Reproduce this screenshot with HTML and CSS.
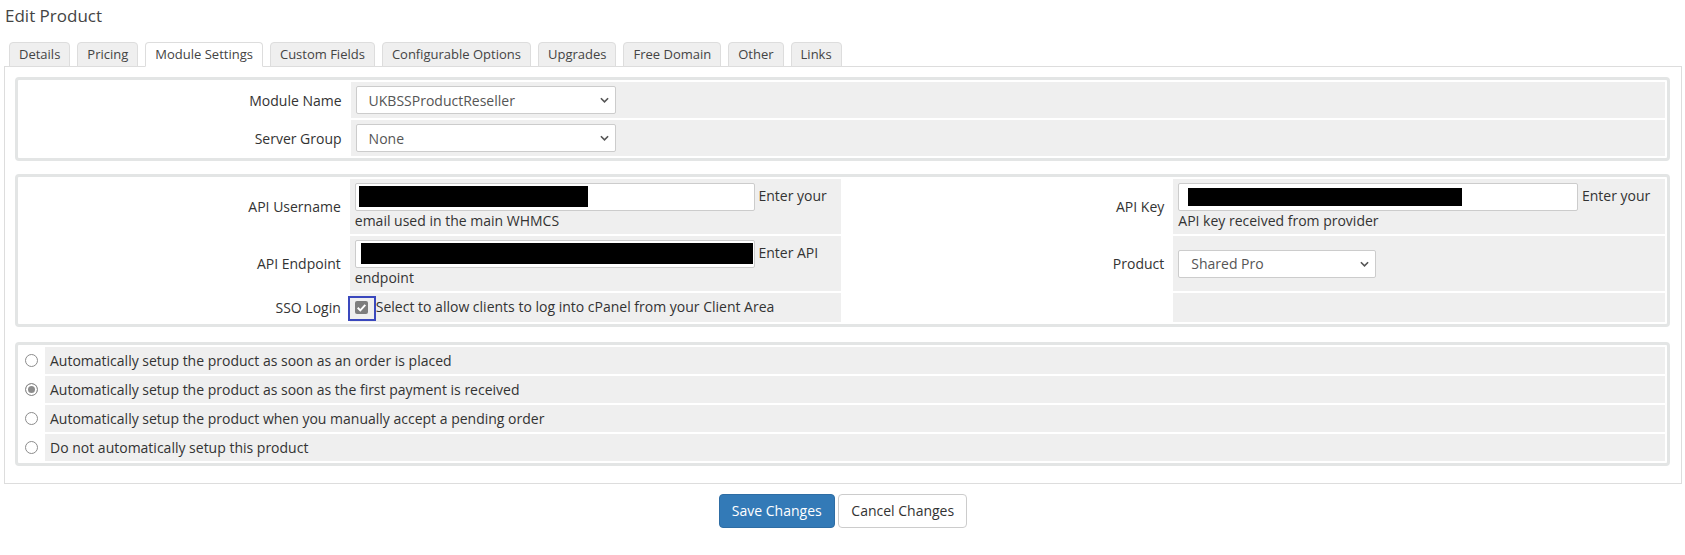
FILE: index.html
```html
<!DOCTYPE html>
<html lang="en">
<head>
    <meta charset="UTF-8">
    <meta name="viewport" content="width=device-width, initial-scale=1.0">
    <title>Edit Product</title>
    <link rel="stylesheet" href="styles.css">
</head>
<body>
    <h1 class="page-title">Edit Product</h1>

    <ul class="tabs">
        <li>Details</li>
        <li>Pricing</li>
        <li class="active">Module Settings</li>
        <li>Custom Fields</li>
        <li>Configurable Options</li>
        <li>Upgrades</li>
        <li>Free Domain</li>
        <li>Other</li>
        <li>Links</li>
    </ul>

    <div class="tab-content">
        <table class="form module-table">
            <tr>
                <td class="fieldlabel">Module Name</td>
                <td class="fieldarea">
                    <div class="select select-wide">
                        <span>UKBSSProductReseller</span>
                        <svg class="chevron" viewBox="0 0 10 6"><path d="M1 1l4 4 4-4"/></svg>
                    </div>
                </td>
            </tr>
            <tr>
                <td class="fieldlabel">Server Group</td>
                <td class="fieldarea">
                    <div class="select select-wide">
                        <span>None</span>
                        <svg class="chevron" viewBox="0 0 10 6"><path d="M1 1l4 4 4-4"/></svg>
                    </div>
                </td>
            </tr>
        </table>

        <table class="form settings-table">
            <tr>
                <td class="fieldlabel">API Username</td>
                <td class="fieldarea">
                    <span class="text-input"><span class="redact redact-user"></span></span> Enter your email used in the main WHMCS
                </td>
                <td class="fieldlabel">API Key</td>
                <td class="fieldarea">
                    <span class="text-input"><span class="redact redact-key"></span></span> Enter your API key received from provider
                </td>
            </tr>
            <tr>
                <td class="fieldlabel">API Endpoint</td>
                <td class="fieldarea">
                    <span class="text-input"><span class="redact redact-endpoint"></span></span> Enter API endpoint
                </td>
                <td class="fieldlabel">Product</td>
                <td class="fieldarea">
                    <div class="select select-small">
                        <span>Shared Pro</span>
                        <svg class="chevron" viewBox="0 0 10 6"><path d="M1 1l4 4 4-4"/></svg>
                    </div>
                </td>
            </tr>
            <tr>
                <td class="fieldlabel">SSO Login</td>
                <td class="fieldarea"><span class="focus-ring"><span class="checkbox"><svg viewBox="0 0 12 12"><path d="M2.5 6.2l2.4 2.4 4.6-5"/></svg></span></span>Select to allow clients to log into cPanel from your Client Area</td>
                <td class="fieldlabel"></td>
                <td class="fieldarea"></td>
            </tr>
        </table>

        <table class="form setup-table">
            <tr>
                <td class="radio-cell"><span class="radio"></span></td>
                <td class="fieldarea">Automatically setup the product as soon as an order is placed</td>
            </tr>
            <tr>
                <td class="radio-cell"><span class="radio checked"></span></td>
                <td class="fieldarea">Automatically setup the product as soon as the first payment is received</td>
            </tr>
            <tr>
                <td class="radio-cell"><span class="radio"></span></td>
                <td class="fieldarea">Automatically setup the product when you manually accept a pending order</td>
            </tr>
            <tr>
                <td class="radio-cell"><span class="radio"></span></td>
                <td class="fieldarea">Do not automatically setup this product</td>
            </tr>
        </table>
    </div>

    <div class="form-actions">
        <button class="btn btn-primary">Save Changes</button>
        <button class="btn btn-default">Cancel Changes</button>
    </div>
</body>
</html>
```

FILE: styles.css
```css
body {
    margin: 0 3px 0 4px;
    font-family: "Open Sans", "Liberation Sans", sans-serif;
    font-size: 14px;
    color: #333;
    background-color: #fff;
}

.page-title {
    margin: 6px 0 16px 1px;
    font-size: 17px;
    font-weight: normal;
    line-height: 20px;
    color: #444;
}

/* tabs */
.tabs {
    display: flex;
    gap: 7px;
    margin: 0;
    padding: 0 0 0 5px;
    list-style: none;
}
.tabs li {
    position: relative;
    margin-bottom: -1px;
    padding: 1px 9px 2px;
    border: 1px solid #ddd;
    border-radius: 4px 4px 0 0;
    background-color: #efefef;
    font-size: 13px;
    line-height: 20px;
    color: #444;
}
.tabs li.active {
    background-color: #fff;
    border-bottom-color: #fff;
}

.tab-content {
    border: 1px solid #ddd;
    padding: 10px 11px 17px 10px;
}

/* form tables */
table.form {
    width: 100%;
    table-layout: fixed;
    border: 3px solid #e3e5e5;
    border-radius: 4px;
    border-spacing: 2px;
}
table.form td {
    box-sizing: border-box;
    padding: 4px 5px;
}
.fieldlabel {
    width: 20%;
    padding-right: 7px !important;
    text-align: right;
    background-color: #fff;
}
.fieldarea {
    background-color: #efefef;
}
.settings-table .fieldarea {
    width: 30%;
}
.module-table {
    margin-bottom: 13px;
}
.settings-table {
    margin-bottom: 15px;
}

.select {
    display: flex;
    align-items: center;
    justify-content: space-between;
    box-sizing: border-box;
    height: 28px;
    padding: 0 6px 0 12px;
    border: 1px solid #ccc;
    border-radius: 2px;
    background-color: #fff;
    color: #555;
}
.select-wide {
    width: 260px;
}
.select-small {
    width: 198px;
}
.chevron {
    width: 9px;
    height: 6px;
    fill: none;
    stroke: #555;
    stroke-width: 1.8;
}

.text-input {
    display: inline-block;
    box-sizing: border-box;
    width: 400px;
    height: 28px;
    padding: 2px 3px;
    border: 1px solid #ccc;
    border-radius: 2px;
    background-color: #fff;
    vertical-align: middle;
}
.redact {
    display: block;
    height: 21px;
    background-color: #000;
}
.redact-user {
    width: 229px;
}
.redact-endpoint {
    width: 392px;
    margin-left: 2px;
}
.redact-key {
    width: 274px;
    height: 18px;
    margin: 2px 0 0 6px;
}

/* sso checkbox */
.focus-ring {
    display: inline-block;
    box-sizing: border-box;
    width: 28px;
    height: 25px;
    margin: -3px 0 -3px -7px;
    padding: 3px 0 0 5px;
    border: 2px solid #3a48bd;
    vertical-align: middle;
}
.checkbox {
    display: block;
    width: 13px;
    height: 13px;
    border-radius: 2px;
    background-color: #7d7d7d;
}
.checkbox svg {
    display: block;
    width: 13px;
    height: 13px;
    fill: none;
    stroke: #fff;
    stroke-width: 1.8;
}

/* setup radios */
.radio-cell {
    width: 23px;
    background-color: #fff;
}
.radio {
    display: block;
    box-sizing: border-box;
    width: 13px;
    height: 13px;
    border: 1px solid #8c8c8c;
    border-radius: 50%;
    background-color: #fff;
}
.radio.checked {
    background-color: #8c8c8c;
    box-shadow: inset 0 0 0 2px #fff;
}

/* buttons */
.form-actions {
    margin-top: 10px;
    text-align: center;
}
.btn {
    padding: 6px 12px;
    border: 1px solid;
    border-radius: 4px;
    font-family: inherit;
    font-size: 14px;
    line-height: 20px;
}
.btn-primary {
    background-color: #337ab7;
    border-color: #2e6da4;
    color: #fff;
}
.btn-default {
    background-color: #fff;
    border-color: #ccc;
    color: #333;
}
```
